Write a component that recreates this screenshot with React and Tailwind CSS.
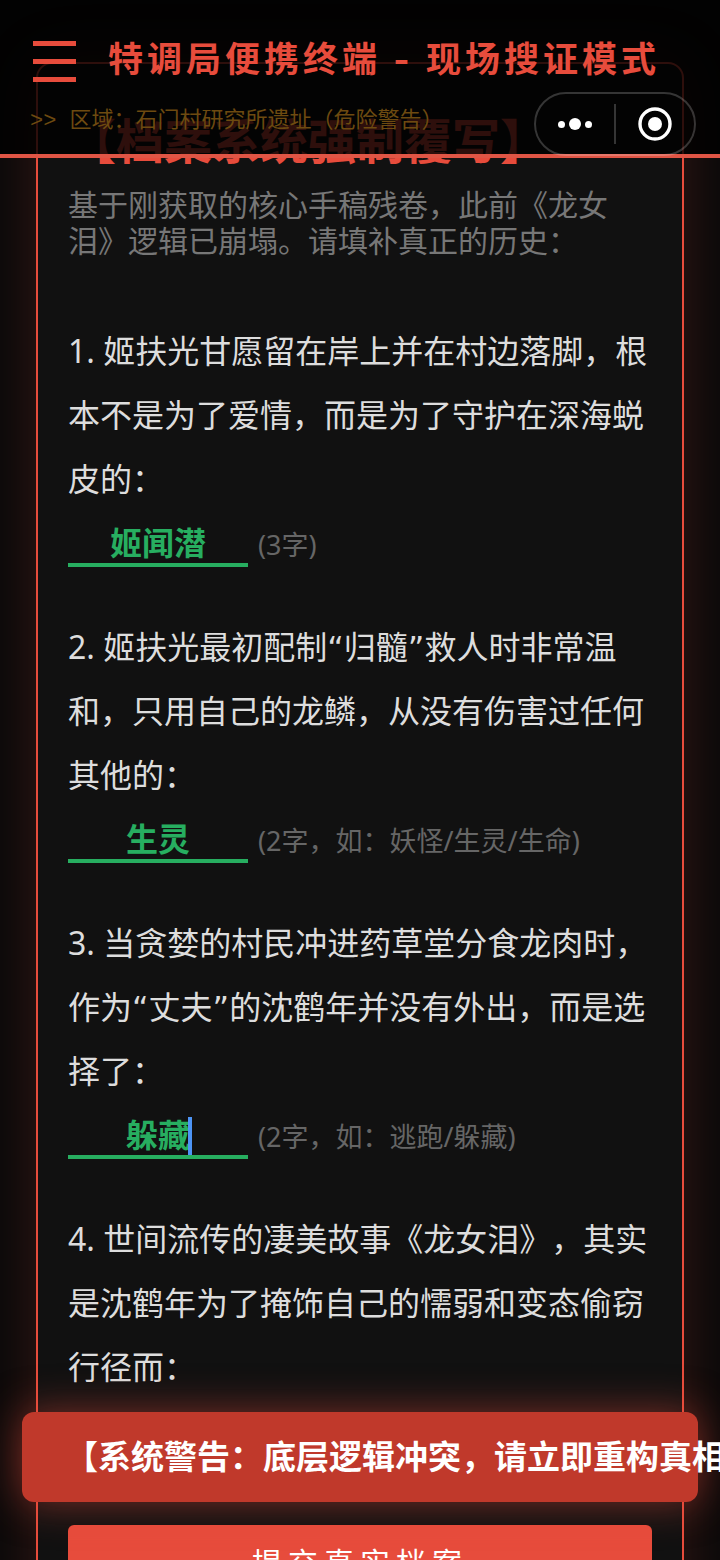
const questions = [
    {
        id: 1,
        text: "姬扶光甘愿留在岸上并在村边落脚，根本不是为了爱情，而是为了守护在深海蜕皮的：",
        answer: "姬闻潜",
        hint: "(3字)",
    },
    {
        id: 2,
        text: "姬扶光最初配制“归髓”救人时非常温和，只用自己的龙鳞，从没有伤害过任何其他的：",
        answer: "生灵",
        hint: "(2字，如：妖怪/生灵/生命)",
    },
    {
        id: 3,
        text: "当贪婪的村民冲进药草堂分食龙肉时，作为“丈夫”的沈鹤年并没有外出，而是选择了：",
        answer: "躲藏",
        hint: "(2字，如：逃跑/躲藏)",
        focused: true,
    },
    {
        id: 4,
        text: "世间流传的凄美故事《龙女泪》，其实是沈鹤年为了掩饰自己的懦弱和变态偷窃行径而：",
        answer: "",
        hint: "",
    },
];

// Noto's quotes are too tight next to Chinese text, so they get a wider face
function withQuotes(text) {
    return text.split(/([“”])/).map((part, i) =>
        part === "“" || part === "”" ? (
            <span key={i} className="font-['DejaVu_Sans',sans-serif] leading-none">
                {part}
            </span>
        ) : (
            part
        )
    );
}

function Question({ item }) {
    return (
        <div className="mb-10">
            <label htmlFor={`answer-${item.id}`} className="block text-[32px] leading-[64px] text-[#dddddd]">
                {withQuotes(`${item.id}. ${item.text}`)}
            </label>
            <div className="flex h-16 items-center gap-[10px]">
                <div className="relative w-[180px] shrink-0">
                    <input
                        id={`answer-${item.id}`}
                        type="text"
                        defaultValue={item.answer}
                        className="block h-12 w-full border-b-4 border-[#27ae60] bg-transparent pt-1 text-center text-[32px] font-bold text-[#27ae60] outline-none"
                    />
                    {item.focused && <span className="absolute bottom-1 left-[120px] h-[38px] w-1 bg-[#4d94f5]" />}
                </div>
                {item.hint && <span className="whitespace-nowrap pt-1 text-[27px] text-[#666666]">{item.hint}</span>}
            </div>
        </div>
    );
}

function Header() {
    return (
        <header className="absolute inset-x-0 top-0 z-10 h-[158px] border-b-4 border-[#e05545] bg-black/80 pt-8">
            <div className="flex h-[54px] items-center gap-8 pl-[33px]">
                <button type="button" aria-label="菜单" className="mt-1 flex w-[43px] flex-col gap-[13px]">
                    <span className="h-[5px] bg-[#e74c3c]" />
                    <span className="h-[5px] bg-[#e74c3c]" />
                    <span className="h-[5px] bg-[#e74c3c]" />
                </button>
                <h1 className="whitespace-nowrap font-['Inter','Noto_Sans_CJK_SC',sans-serif] text-[35px] font-bold tracking-[4px] text-[#e74c3c]">
                    特调局便携终端 - 现场搜证模式
                </h1>
            </div>
            <p className="mt-[22px] whitespace-nowrap pl-[30px] font-['Liberation_Mono','Noto_Sans_CJK_SC',monospace] text-[22px] leading-7 text-[#6d4a10]">
                &gt;&gt; 区域：石门村研究所遗址（危险警告）
            </p>
        </header>
    );
}

function Capsule() {
    return (
        <div className="absolute right-6 top-[92px] z-20 flex h-16 w-[162px] items-center rounded-full border-2 border-white/20">
            <button type="button" aria-label="更多" className="flex flex-1 items-center justify-center gap-1">
                <span className="size-[7px] rounded-full bg-white" />
                <span className="size-3 rounded-full bg-white" />
                <span className="size-[7px] rounded-full bg-white" />
            </button>
            <span className="h-10 w-[2px] bg-white/20" />
            <button type="button" aria-label="关闭" className="flex flex-1 items-center justify-center">
                <svg viewBox="0 0 34 34" className="size-[34px]">
                    <circle cx="17" cy="17" r="15" fill="none" stroke="#fff" strokeWidth="3.4" />
                    <circle cx="17" cy="17" r="7" fill="#fff" />
                </svg>
            </button>
        </div>
    );
}

export default function App() {
    return (
        <div className="relative h-screen overflow-hidden bg-[#0a0a0a] font-['Noto_Sans','Noto_Sans_CJK_SC',sans-serif] [text-spacing-trim:space-all]">
            <Header />
            <Capsule />

            <main className="px-9 pt-[62px]">
                <section className="rounded-2xl border-2 border-[#e74c3c] bg-[#111111] p-[30px] shadow-[0_0_60px_rgba(231,76,60,0.2)]">
                    <h2 className="mb-[15px] mt-4 whitespace-nowrap text-[48px] font-bold leading-[62px] text-[#e74c3c]">
                        【档案系统强制覆写】
                    </h2>
                    <p className="mb-[60px] text-[30px] leading-9 text-[#777777]">
                        基于刚获取的核心手稿残卷，此前《龙女泪》逻辑已崩塌。请填补真正的历史：
                    </p>

                    {questions.map((item) => (
                        <Question key={item.id} item={item} />
                    ))}

                    <button
                        type="button"
                        className="mt-[22px] h-[74px] w-full rounded-md bg-[#e74c3c] text-[30px] tracking-[6px] text-white"
                    >
                        提交真实档案
                    </button>
                </section>
            </main>

            {/* Warning toast */}
            <div
                role="alert"
                className="absolute inset-x-[22px] bottom-[58px] z-10 flex h-[90px] items-center whitespace-nowrap rounded-xl bg-[#c0392b] pl-[43px] text-[33px] font-bold text-white shadow-[0_0_40px_rgba(231,76,60,0.5)]"
            >
                【系统警告：底层逻辑冲突，请立即重构真相
            </div>
        </div>
    );
}
